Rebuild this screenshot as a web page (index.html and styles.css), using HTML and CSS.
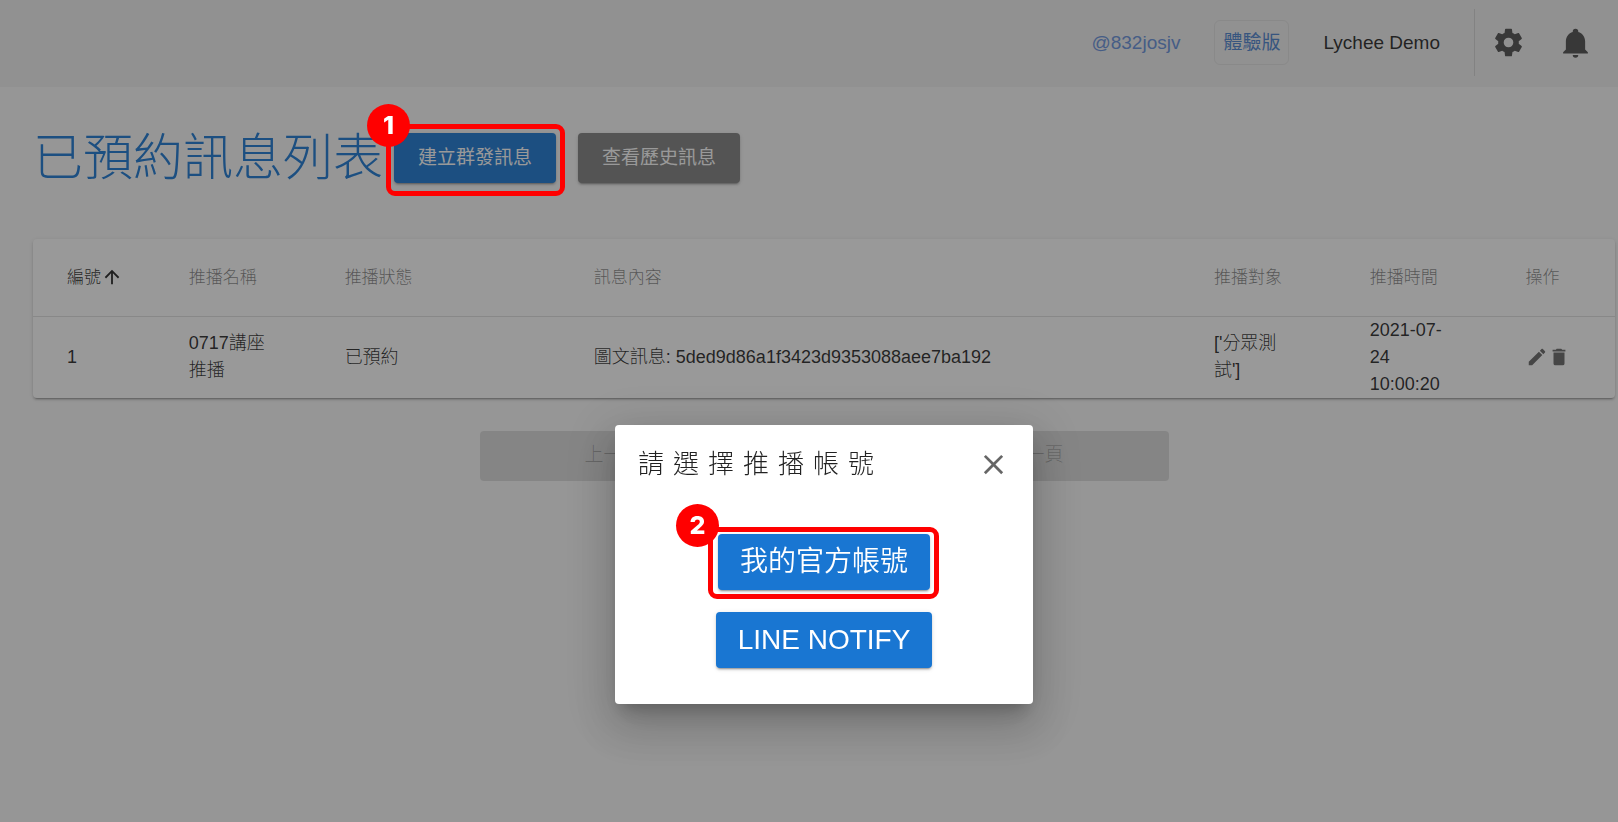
FILE: index.html
```html
<!DOCTYPE html>
<html lang="zh-Hant">
<head>
<meta charset="UTF-8">
<meta name="viewport" content="width=device-width, initial-scale=1.0">
<title>已預約訊息列表</title>
<link rel="stylesheet" href="styles.css">
</head>
<body>
<header class="topbar">
  <a class="account" href="#">@832josjv</a>
  <a class="plan" href="#">體驗版</a>
  <span class="user">Lychee Demo</span>
  <div class="tools">
    <button type="button" class="icon-btn" aria-label="設定">
      <svg class="icon-lg" viewBox="0 0 24 24"><path d="M12,15.5A3.5,3.5 0 0,1 8.5,12A3.5,3.5 0 0,1 12,8.5A3.5,3.5 0 0,1 15.5,12A3.5,3.5 0 0,1 12,15.5M19.43,12.97C19.47,12.65 19.5,12.33 19.5,12C19.5,11.67 19.47,11.34 19.43,11L21.54,9.37C21.73,9.22 21.78,8.95 21.66,8.73L19.66,5.27C19.54,5.05 19.27,4.96 19.05,5.05L16.56,6.05C16.04,5.66 15.5,5.32 14.87,5.07L14.5,2.42C14.46,2.18 14.25,2 14,2H10C9.75,2 9.54,2.18 9.5,2.42L9.13,5.07C8.5,5.32 7.96,5.66 7.44,6.05L4.95,5.05C4.73,4.96 4.46,5.05 4.34,5.27L2.34,8.73C2.21,8.95 2.27,9.22 2.46,9.37L4.57,11C4.53,11.34 4.5,11.67 4.5,12C4.5,12.33 4.53,12.65 4.57,12.97L2.46,14.63C2.27,14.78 2.21,15.05 2.34,15.27L4.34,18.73C4.46,18.95 4.73,19.03 4.95,18.95L7.44,17.94C7.96,18.34 8.5,18.68 9.13,18.93L9.5,21.58C9.54,21.82 9.75,22 10,22H14C14.25,22 14.46,21.82 14.5,21.58L14.87,18.93C15.5,18.67 16.04,18.34 16.56,17.94L19.05,18.95C19.27,19.03 19.54,18.95 19.66,18.73L21.66,15.27C21.78,15.05 21.73,14.78 21.54,14.63L19.43,12.97Z"/></svg>
    </button>
    <button type="button" class="icon-btn" aria-label="通知">
      <svg class="icon-lg" viewBox="0 0 24 24"><path d="M21,19V20H3V19L5,17V11C5,7.9 7.03,5.17 10,4.29C10,4.19 10,4.1 10,4A2,2 0 0,1 12,2A2,2 0 0,1 14,4C14,4.1 14,4.19 14,4.29C16.97,5.17 19,7.9 19,11V17L21,19M14,21A2,2 0 0,1 12,23A2,2 0 0,1 10,21"/></svg>
    </button>
  </div>
</header>

<main class="container">
  <div class="heading">
    <h1>已預約訊息列表</h1>
    <div class="step">
      <button type="button" class="btn btn-primary">建立群發訊息</button>
      <span class="step-frame"></span>
      <span class="step-number">1</span>
    </div>
    <button type="button" class="btn btn-grey">查看歷史訊息</button>
  </div>

  <table class="messages">
    <colgroup>
      <col class="col-id">
      <col class="col-std">
      <col class="col-status">
      <col class="col-content">
      <col class="col-std">
      <col class="col-std">
      <col class="col-actions">
    </colgroup>
    <thead>
      <tr>
        <th class="sorted"><span class="sort">編號<svg class="icon-sm" viewBox="0 0 24 24"><path d="M13,20H11V8L5.5,13.5L4.08,12.08L12,4.16L19.92,12.08L18.5,13.5L13,8V20Z"/></svg></span></th>
        <th>推播名稱</th>
        <th>推播狀態</th>
        <th>訊息內容</th>
        <th>推播對象</th>
        <th>推播時間</th>
        <th>操作</th>
      </tr>
    </thead>
    <tbody>
      <tr>
        <td>1</td>
        <td>0717講座推播</td>
        <td>已預約</td>
        <td>圖文訊息: 5ded9d86a1f3423d9353088aee7ba192</td>
        <td>['分眾測試']</td>
        <td>2021-07-24 10:00:20</td>
        <td>
          <div class="actions">
            <button type="button" class="icon-btn" aria-label="編輯"><svg class="icon-sm" viewBox="0 0 24 24"><path d="M20.71,7.04C21.1,6.65 21.1,6 20.71,5.63L18.37,3.29C18,2.9 17.35,2.9 16.96,3.29L15.12,5.12L18.87,8.87M3,17.25V21H6.75L17.81,9.93L14.06,6.18L3,17.25Z"/></svg></button>
            <button type="button" class="icon-btn" aria-label="刪除"><svg class="icon-sm" viewBox="0 0 24 24"><path d="M19,4H15.5L14.5,3H9.5L8.5,4H5V6H19M6,19A2,2 0 0,0 8,21H16A2,2 0 0,0 18,19V7H6V19Z"/></svg></button>
          </div>
        </td>
      </tr>
    </tbody>
  </table>

  <div class="pager">
    <button type="button" class="btn" disabled>上一頁</button>
    <button type="button" class="btn" disabled>下一頁</button>
  </div>
</main>

<div class="overlay">
  <div class="dialog" role="dialog" aria-labelledby="dialog-title">
    <div class="dialog-head">
      <h2 id="dialog-title">請選擇推播帳號</h2>
      <button type="button" class="icon-btn" aria-label="關閉">
        <svg class="icon-lg" viewBox="0 0 24 24"><path d="M19,6.41L17.59,5L12,10.59L6.41,5L5,6.41L10.59,12L5,17.59L6.41,19L12,13.41L17.59,19L19,17.59L13.41,12L19,6.41Z"/></svg>
      </button>
    </div>
    <div class="dialog-body">
      <div class="step">
        <button type="button" class="btn btn-primary btn-large">我的官方帳號</button>
        <span class="step-frame"></span>
        <span class="step-number">2</span>
      </div>
      <button type="button" class="btn btn-primary btn-large">LINE NOTIFY</button>
    </div>
  </div>
</div>
</body>
</html>
```

FILE: styles.css
```css
* {
  box-sizing: border-box;
}

body {
  margin: 0;
  min-height: 100vh;
  background-color: #fafafa;
  color: rgba(0, 0, 0, 0.87);
  font-family: "Liberation Sans", "Noto Sans CJK TC", sans-serif;
  font-size: 18px;
  font-weight: 300;
  line-height: 27px;
}

button {
  font: inherit;
  border: none;
  cursor: pointer;
}

svg {
  display: block;
  fill: currentColor;
}

.icon-lg {
  width: 33px;
  height: 33px;
}

.icon-sm {
  width: 22px;
  height: 22px;
}

.icon-btn {
  padding: 0;
  background: none;
  color: rgba(0, 0, 0, 0.6);
}

/* top bar */
.topbar {
  display: flex;
  justify-content: flex-end;
  align-items: center;
  gap: 34px;
  padding: 9px 26px 11px;
  background-color: #f0f0f0;
  font-size: 19px;
}

.topbar a {
  text-decoration: none;
}

.account {
  color: #6690dc;
}

.plan {
  padding: 8px;
  border: 1px solid #e2e2e2;
  border-radius: 6px;
  color: #4a82cf;
  font-weight: 400;
}

.tools {
  display: flex;
  align-items: center;
  gap: 34px;
  height: 67px;
  padding-left: 17px;
  border-left: 1px solid #d4d4d4;
}

.tools .icon-btn {
  color: #4c4c4c;
}

/* page */
.container {
  padding: 36px 3px 32px 33px;
}

.heading {
  display: flex;
  align-items: center;
  margin-bottom: 46px;
}

.heading h1 {
  margin: 0 11px 0 0;
  color: #1976d2;
  font-size: 50px;
  font-weight: 300;
  line-height: 70px;
}

.heading .step {
  margin-right: 22px;
}

.btn {
  height: 50px;
  padding: 0 24px 2px;
  border-radius: 4px;
  font-size: 19px;
  font-weight: 400;
  box-shadow: 0 3px 1px -2px rgba(0, 0, 0, 0.2), 0 2px 2px 0 rgba(0, 0, 0, 0.14), 0 1px 5px 0 rgba(0, 0, 0, 0.12);
}

.btn-primary {
  background-color: #1976d2;
  color: #fff;
}

.btn-grey {
  background-color: #808080;
  color: #fff;
}

.btn:disabled {
  background-color: rgba(0, 0, 0, 0.12);
  color: rgba(0, 0, 0, 0.26);
  font-weight: 300;
  box-shadow: none;
  cursor: default;
}

.btn-large {
  height: 56px;
  padding: 0 22px 2px;
  font-size: 28px;
  font-weight: 350;
}

/* numbered markers, drawn above the overlay */
.step {
  position: relative;
  display: flex;
}

.step-frame {
  position: absolute;
  inset: -9px -9px -13px -8px;
  border: 5px solid #f00;
  border-radius: 9px;
  z-index: 20;
  pointer-events: none;
}

.btn-large + .step-frame {
  inset: -7px -9px -9px -10px;
}

.step-number {
  position: absolute;
  top: -29px;
  left: -27px;
  width: 43px;
  height: 43px;
  border-radius: 50%;
  background-color: #f00;
  color: #fff;
  font-family: Inter, sans-serif;
  font-size: 25px;
  font-weight: 800;
  line-height: 43px;
  text-align: center;
  z-index: 21;
}

.dialog .step-number {
  top: -30px;
  left: -42px;
}

/* table */
.messages {
  width: 100%;
  table-layout: fixed;
  border-collapse: collapse;
  border-radius: 4px;
  background-color: #fff;
  box-shadow: 0 3px 1px -2px rgba(0, 0, 0, 0.2), 0 2px 2px 0 rgba(0, 0, 0, 0.14), 0 1px 5px 0 rgba(0, 0, 0, 0.12);
}

.col-id {
  width: 7.7%;
}

.col-std {
  width: 9.85%;
}

.col-status {
  width: 15.75%;
}

.col-content {
  width: 39.2%;
}

.col-actions {
  width: 7.8%;
}

.messages th,
.messages td {
  padding: 0 34px;
  text-align: left;
}

.messages th {
  height: 77px;
  padding-right: 0;
  border-bottom: 1px solid #e0e0e0;
  color: rgba(0, 0, 0, 0.5);
  font-size: 17px;
  font-weight: 300;
}

.messages th.sorted {
  color: rgba(0, 0, 0, 0.87);
}

.messages td {
  height: 81px;
}

.sort,
.actions {
  display: flex;
  align-items: center;
}

.pager {
  display: flex;
  justify-content: center;
  gap: 155px;
  margin-top: 33px;
}

.pager .btn {
  width: 267px;
}

/* dialog */
.overlay {
  position: fixed;
  inset: 0;
  display: flex;
  justify-content: center;
  align-items: flex-start;
  padding: 425px 0 0 30px;
  background-color: rgba(33, 33, 33, 0.46);
  z-index: 10;
}

.dialog {
  width: 418px;
  padding: 21px 23px 22px;
  border-radius: 4px;
  background-color: #fff;
  box-shadow: 0 11px 15px -7px rgba(0, 0, 0, 0.2), 0 24px 38px 3px rgba(0, 0, 0, 0.14), 0 9px 46px 8px rgba(0, 0, 0, 0.12);
}

.dialog-head {
  display: flex;
  justify-content: space-between;
  align-items: center;
  height: 36px;
}

.dialog-head h2 {
  margin: 0;
  font-size: 26px;
  font-weight: 300;
  letter-spacing: 9px;
}

.dialog-body {
  display: flex;
  flex-direction: column;
  align-items: center;
  gap: 22px;
  padding: 52px 0 14px;
}
```
